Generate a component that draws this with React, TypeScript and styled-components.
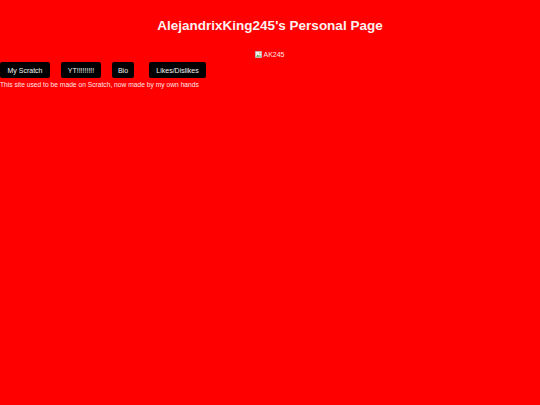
import styled, { createGlobalStyle } from 'styled-components';

const GlobalStyle = createGlobalStyle`
  html, body {
    margin: 0;
    padding: 0;
    background: #ff0000;
  }
  body {
    font-family: "Liberation Sans", Arial, sans-serif;
    min-height: 405px;
  }
`;

const Page = styled.div`
  min-height: 405px;
  background: #ff0000;
  color: #ffffff;
`;

const Title = styled.h1`
  margin: 0;
  padding-top: 17px;
  font-size: 13.5px;
  line-height: 17px;
  font-weight: 700;
  text-align: center;
  color: #fbf1f1;
`;

const Avatar = styled.div`
  display: flex;
  justify-content: center;
  align-items: center;
  gap: 1px;
  margin-top: 16px;
  height: 9px;
  font-size: 7px;
  color: #ffe6e6;
`;

const Nav = styled.nav`
  display: flex;
  margin-top: 3px;
`;

const NavButton = styled.button<{ $width: number; $gap: number }>`
  width: ${({ $width }) => $width}px;
  height: 16px;
  margin-right: ${({ $gap }) => $gap}px;
  padding: 0;
  border: none;
  border-radius: 2px;
  background: #000000;
  color: #f4f4f4;
  font-family: "Liberation Sans", Arial, sans-serif;
  font-size: 7px;
  white-space: nowrap;
  cursor: pointer;
`;

const Note = styled.p`
  margin: 2px 0 0;
  font-size: 6.7px;
  line-height: 9px;
  color: #ffe4e4;
`;

const BrokenImage = () => (
  <svg width="7" height="7" viewBox="0 0 16 16">
    <rect x="0.5" y="0.5" width="15" height="15" fill="#f2f2f2" stroke="#9a9a9a" />
    <path d="M2 13 L6 8 L9 11 L11 9 L14 13 Z" fill="#6aa85a" />
    <circle cx="11" cy="5" r="1.8" fill="#d9a23a" />
  </svg>
);

export default function App() {
  const links = [
    { label: 'My Scratch', width: 50, gap: 11 },
    { label: 'YT!!!!!!!!!', width: 40, gap: 11 },
    { label: 'Bio', width: 22, gap: 15 },
    { label: 'Likes/Dislikes', width: 57, gap: 0 },
  ];

  return (
    <Page>
      <GlobalStyle />
      <Title>AlejandrixKing245's Personal Page</Title>
      <Avatar>
        <BrokenImage />
        <span>AK245</span>
      </Avatar>
      <Nav>
        {links.map((l) => (
          <NavButton key={l.label} $width={l.width} $gap={l.gap}>
            {l.label}
          </NavButton>
        ))}
      </Nav>
      <Note>This site used to be made on Scratch, now made by my own hands</Note>
    </Page>
  );
}
